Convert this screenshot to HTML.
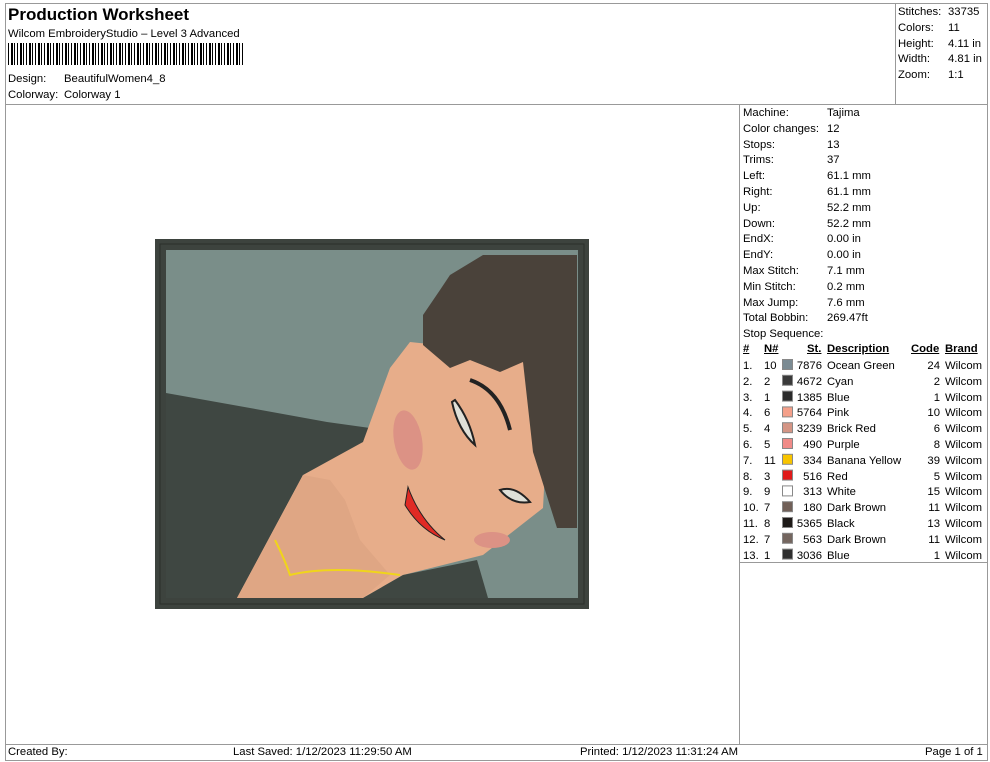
<!DOCTYPE html>
<html><head><meta charset="utf-8"><style>
body{margin:0;width:990px;height:762px;background:#fff;font-family:"Liberation Sans",sans-serif;color:#000;position:relative;overflow:hidden}
.a{position:absolute;white-space:nowrap}
.ln{position:absolute;background:#999}
.t{font-size:11.3px}
</style></head><body>
<div class="ln" style="left:5px;top:3px;width:983px;height:1px"></div>
<div class="ln" style="left:5px;top:3px;width:1px;height:758px"></div>
<div class="ln" style="left:987px;top:3px;width:1px;height:758px"></div>
<div class="ln" style="left:5px;top:760px;width:983px;height:1px"></div>
<div class="ln" style="left:5px;top:104px;width:983px;height:1px"></div>
<div class="ln" style="left:895px;top:3px;width:1px;height:101px"></div>
<div class="ln" style="left:739px;top:104px;width:1px;height:640px"></div>
<div class="ln" style="left:5px;top:744px;width:983px;height:1px"></div>
<div class="ln" style="left:739px;top:562px;width:249px;height:1px"></div>

<div class="a" style="left:8px;top:5px;font-size:17px;font-weight:bold">Production Worksheet</div>
<div class="a t" style="left:8px;top:28px">Wilcom EmbroideryStudio – Level 3 Advanced</div>
<div class="a" style="left:8px;top:43px;width:236px;height:22px;background:repeating-linear-gradient(90deg,#000 0 1px,#fff 1px 3px,#000 3px 5px,#fff 5px 6px,#000 6px 7px,#fff 7px 9px)"></div>
<div class="a t" style="left:8px;top:73px">Design:</div><div class="a t" style="left:64px;top:73px">BeautifulWomen4_8</div>
<div class="a t" style="left:8px;top:89px">Colorway:</div><div class="a t" style="left:64px;top:89px">Colorway 1</div>

<div class="a t" style="left:898px;top:5px;line-height:15.8px">Stitches:<br>Colors:<br>Height:<br>Width:<br>Zoom:</div>
<div class="a t" style="left:948px;top:5px;line-height:15.8px">33735<br>11<br>4.11 in<br>4.81 in<br>1:1</div>

<div class="a t" style="left:743px;top:106px;line-height:15.8px">Machine:<br>Color changes:<br>Stops:<br>Trims:<br>Left:<br>Right:<br>Up:<br>Down:<br>EndX:<br>EndY:<br>Max Stitch:<br>Min Stitch:<br>Max Jump:<br>Total Bobbin:<br>Stop Sequence:</div>
<div class="a t" style="left:827px;top:106px;line-height:15.8px">Tajima<br>12<br>13<br>37<br>61.1 mm<br>61.1 mm<br>52.2 mm<br>52.2 mm<br>0.00 in<br>0.00 in<br>7.1 mm<br>0.2 mm<br>7.6 mm<br>269.47ft</div>

<div class="a t" style="left:743px;top:343px;font-weight:bold;text-decoration:underline">#</div>
<div class="a t" style="left:764px;top:343px;font-weight:bold;text-decoration:underline">N#</div>
<div class="a t" style="left:807px;top:343px;font-weight:bold;text-decoration:underline">St.</div>
<div class="a t" style="left:827px;top:343px;font-weight:bold;text-decoration:underline">Description</div>
<div class="a t" style="left:911px;top:343px;font-weight:bold;text-decoration:underline">Code</div>
<div class="a t" style="left:945px;top:343px;font-weight:bold;text-decoration:underline">Brand</div>

<div class="a t" style="left:743px;top:359px;line-height:15.8px">1.<br>2.<br>3.<br>4.<br>5.<br>6.<br>7.<br>8.<br>9.<br>10.<br>11.<br>12.<br>13.</div>
<div class="a t" style="left:764px;top:359px;line-height:15.8px">10<br>2<br>1<br>6<br>4<br>5<br>11<br>3<br>9<br>7<br>8<br>7<br>1</div>
<div class="a t" style="left:790px;top:359px;width:32px;text-align:right;line-height:15.8px">7876<br>4672<br>1385<br>5764<br>3239<br>490<br>334<br>516<br>313<br>180<br>5365<br>563<br>3036</div>
<div class="a t" style="left:827px;top:359px;line-height:15.8px">Ocean Green<br>Cyan<br>Blue<br>Pink<br>Brick Red<br>Purple<br>Banana Yellow<br>Red<br>White<br>Dark Brown<br>Black<br>Dark Brown<br>Blue</div>
<div class="a t" style="left:900px;top:359px;width:40px;text-align:right;line-height:15.8px">24<br>2<br>1<br>10<br>6<br>8<br>39<br>5<br>15<br>11<br>13<br>11<br>1</div>
<div class="a t" style="left:945px;top:359px;line-height:15.8px">Wilcom<br>Wilcom<br>Wilcom<br>Wilcom<br>Wilcom<br>Wilcom<br>Wilcom<br>Wilcom<br>Wilcom<br>Wilcom<br>Wilcom<br>Wilcom<br>Wilcom</div>
<svg class="a" style="left:782px;top:358px" width="12" height="210">
<g stroke="#888" stroke-width="1">
<rect x=".5" y="1.5" width="10" height="10" fill="#7b8b93"/>
<rect x=".5" y="17.3" width="10" height="10" fill="#3a3a3a"/>
<rect x=".5" y="33.1" width="10" height="10" fill="#2a2a2a"/>
<rect x=".5" y="48.9" width="10" height="10" fill="#f4a08a"/>
<rect x=".5" y="64.7" width="10" height="10" fill="#d49585"/>
<rect x=".5" y="80.5" width="10" height="10" fill="#f08b88"/>
<rect x=".5" y="96.3" width="10" height="10" fill="#f8c400"/>
<rect x=".5" y="112.1" width="10" height="10" fill="#e01a1a"/>
<rect x=".5" y="127.9" width="10" height="10" fill="#fff"/>
<rect x=".5" y="143.7" width="10" height="10" fill="#716058"/>
<rect x=".5" y="159.5" width="10" height="10" fill="#1e1a18"/>
<rect x=".5" y="175.3" width="10" height="10" fill="#74665f"/>
<rect x=".5" y="191.1" width="10" height="10" fill="#2e2e2e"/>
</g></svg>

<svg class="a" style="left:155px;top:239px" width="434" height="370" viewBox="155 239 434 370">
<rect x="155" y="239" width="434" height="370" fill="#3d433e"/>
<rect x="160" y="244" width="424" height="360" fill="none" stroke="#2a2f2b" stroke-width="1"/>
<rect x="166" y="250" width="412" height="348" fill="#7a8e89"/>
<polygon points="166,393 250,408 327,422 370,428 380,470 330,480 303,475 237,598 166,598" fill="#3f4742"/>
<polygon points="237,598 303,475 363,442 390,368 410,342 533,355 545,470 543,508 483,555 403,575 363,598" fill="#e7ad8a"/>
<polygon points="477,560 488,598 363,598 403,575" fill="#3f4742"/>
<polygon points="303,475 330,480 345,500 360,540 390,575 363,598 237,598" fill="#dfa684"/>
<polygon points="423,315 440,290 450,275 483,255 577,255 577,528 557,528 545,490 533,452 523,362 500,372 470,360 450,368 423,345" fill="#4a423a"/>
<ellipse cx="408" cy="440" rx="14" ry="30" fill="#dc9285" transform="rotate(-10 408 440)"/>
<ellipse cx="492" cy="540" rx="18" ry="8" fill="#dc9285"/>
<path d="M408 487 Q420 520 445 540 Q420 530 405 505 Z" fill="#e02a24" stroke="#222" stroke-width="1"/>
<path d="M452 402 Q458 430 475 445 Q470 420 455 400 Z" fill="#dfe0d8" stroke="#222" stroke-width="2"/>
<path d="M500 490 Q515 485 530 502 Q512 505 500 490 Z" fill="#dfe0d8" stroke="#222" stroke-width="2"/>
<path d="M470 380 Q500 390 510 430" fill="none" stroke="#222" stroke-width="4"/>
<path d="M275 540 Q285 560 290 575 Q330 565 400 575" fill="none" stroke="#f0d51a" stroke-width="2"/>
</svg>

<div class="a t" style="left:8px;top:746px">Created By:</div>
<div class="a t" style="left:233px;top:746px">Last Saved: 1/12/2023 11:29:50 AM</div>
<div class="a t" style="left:580px;top:746px">Printed: 1/12/2023 11:31:24 AM</div>
<div class="a t" style="left:925px;top:746px">Page 1 of 1</div>
</body></html>
